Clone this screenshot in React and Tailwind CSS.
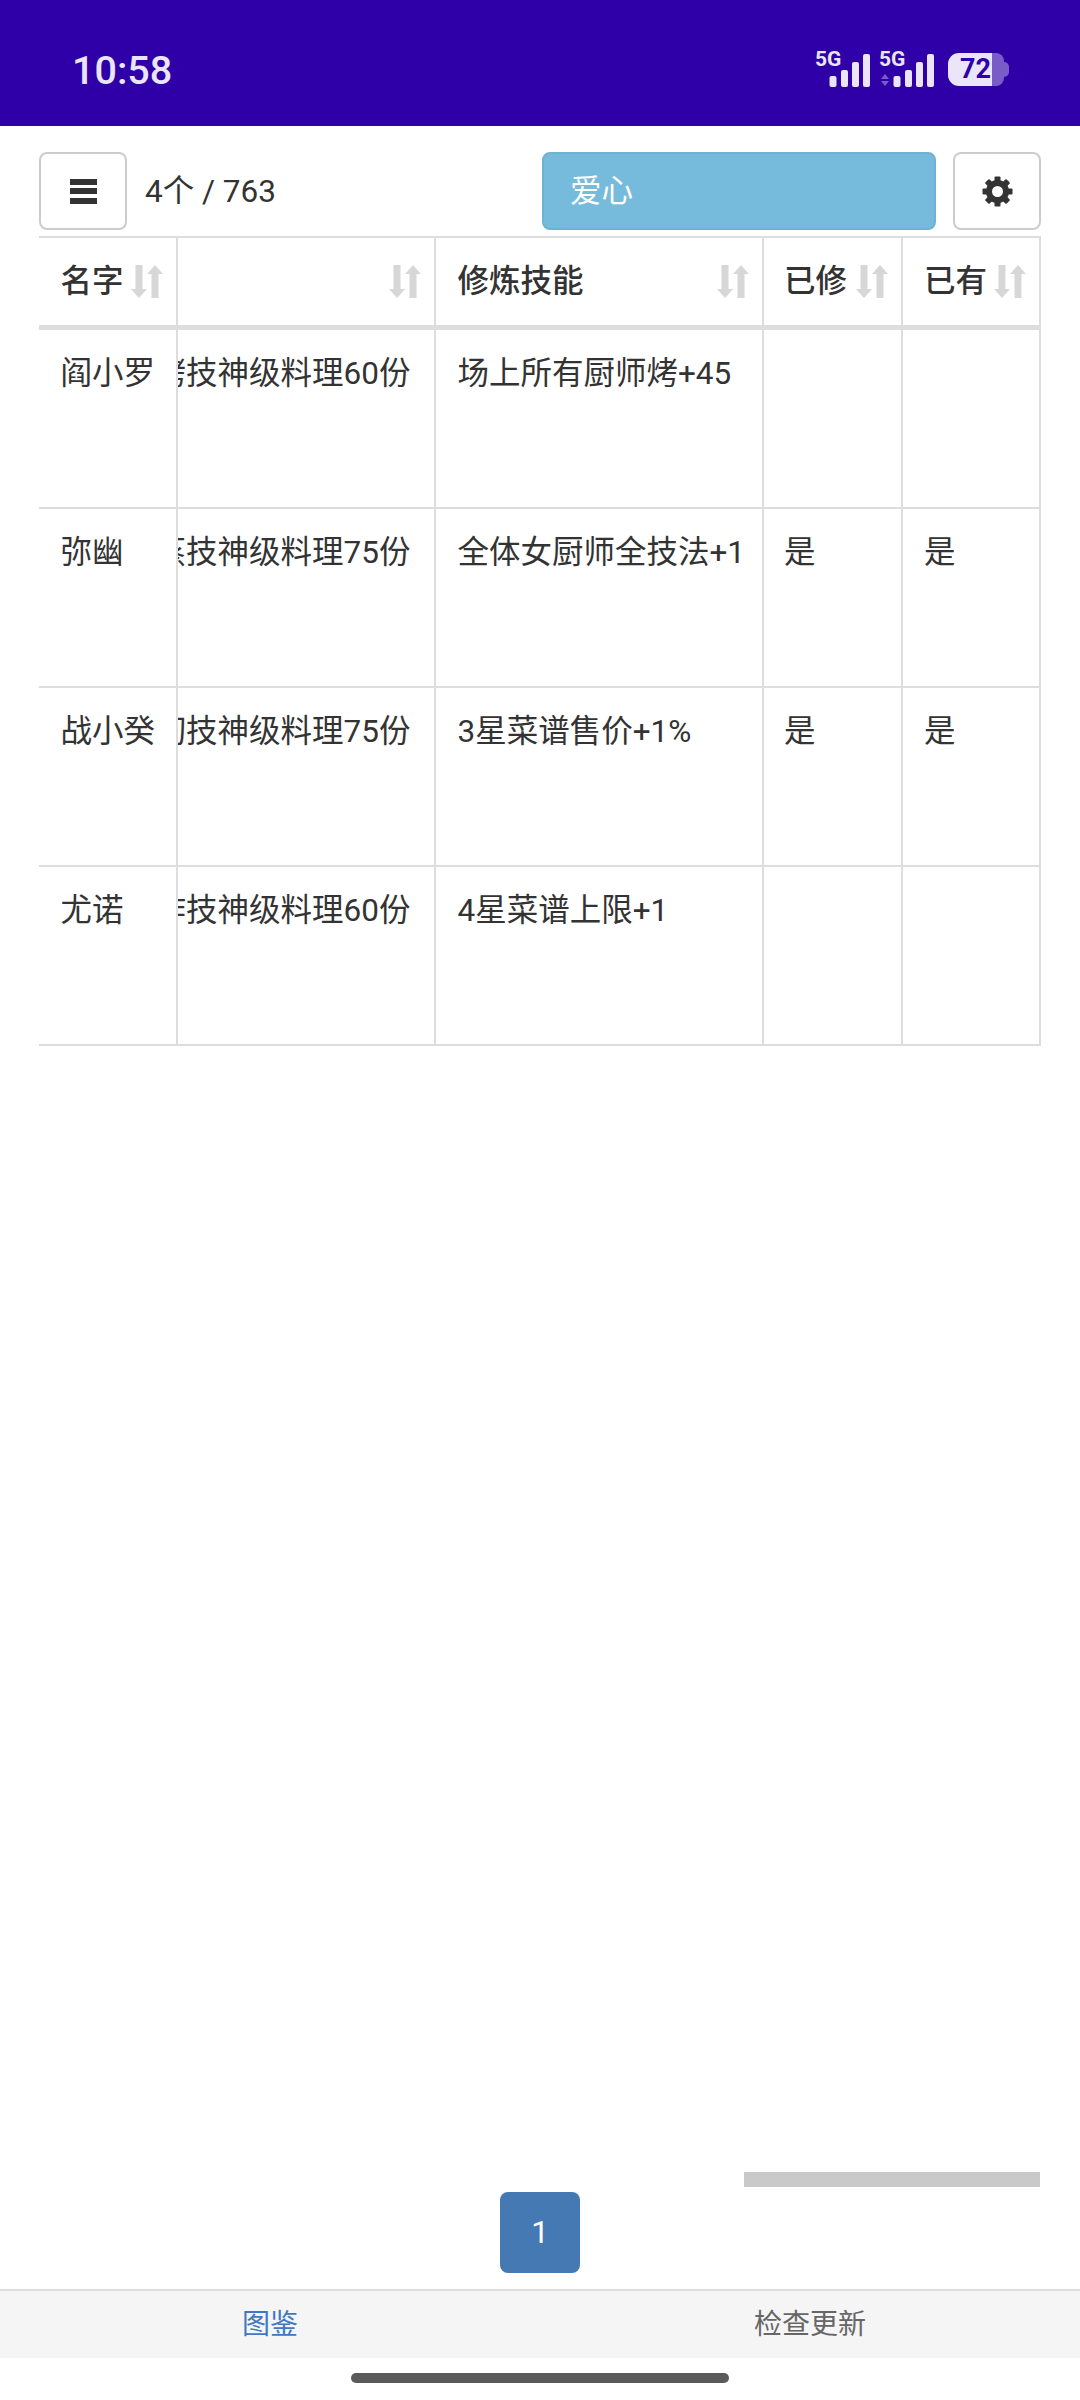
import React from "react";

function SortIcon() {
  return (
    <svg width="32" height="33" viewBox="0 0 32 33" className="shrink-0" fill="#d7d7d7">
      <path d="M4.500 0h7v24H16l-8 9-8-9h4.500z" />
      <path d="M24 0l8 9h-4.500v24h-7V9H16z" />
    </svg>
  );
}

function Cog() {
  const angles = [0, 45, 90, 135, 180, 225, 270, 315];
  return (
    <svg width="31" height="31" viewBox="0 0 31 31" fill="#333333">
      {angles.map((a) => (
        <rect key={a} x="12.500" y="0.500" width="6" height="7" rx="1" transform={`rotate(${a} 15.500 15.500)`} />
      ))}
      <circle cx="15.500" cy="15.500" r="8.500" fill="none" stroke="#333333" strokeWidth="6" />
    </svg>
  );
}

function Signal({ arrows }) {
  return (
    <div className="relative w-[54px] h-[36px]">
      <span className="absolute left-[-1px] top-[-4px] text-[21px] leading-[24px] font-bold text-[#ebe5fa]">5G</span>
      <svg className="absolute left-0 top-0" width="54" height="36" viewBox="0 0 54 36">
        <g fill="#ebe5fa">
          <rect x="13.500" y="25" width="7" height="11" rx="2" />
          <rect x="25" y="19" width="7" height="17" rx="2" />
          <rect x="36" y="11" width="7" height="25" rx="2" />
          <rect x="47" y="3" width="7" height="33" rx="2" />
        </g>
        {arrows && (
          <g fill="#7a5cc9">
            <path d="M5 23l4 5H1z" />
            <path d="M1 30h8l-4 5z" />
          </g>
        )}
      </svg>
    </div>
  );
}

function Battery() {
  return (
    <div className="flex items-center w-[61px] h-[33px] ml-[4px]">
      <div className="w-[44px] h-full bg-[#ebe5fa] rounded-l-[11px] flex items-center justify-end pr-[1px] text-[#2f00a7] text-[27px] font-bold leading-none">72</div>
      <div className="w-[12px] h-full bg-[#7a5cc9] rounded-r-[8px]" />
      <div className="w-[5px] h-[15px] bg-[#7a5cc9] rounded-r-[5px]" />
    </div>
  );
}

const widths = ["w-[139px]", "w-[258px]", "w-[328px]", "w-[139px]", "w-[138px]"];

const rows = [
  { name: "阎小罗", task: "烤技神级料理60份", skill: "场上所有厨师烤+45", a: "", b: "" },
  { name: "弥幽", task: "蒸技神级料理75份", skill: "全体女厨师全技法+1", a: "是", b: "是" },
  { name: "战小癸", task: "切技神级料理75份", skill: "3星菜谱售价+1%", a: "是", b: "是" },
  { name: "尤诺", task: "炸技神级料理60份", skill: "4星菜谱上限+1", a: "", b: "" },
];

function Head({ className, children }) {
  return (
    <div className={`${className} h-[87px] flex items-center justify-between pr-[13px] border-r-2 border-[#dddddd] shrink-0 font-medium`}>
      <span>{children}</span>
      <SortIcon />
    </div>
  );
}

function Cell({ className, children }) {
  return (
    <div className={`${className} pt-[24px] border-r-2 border-[#dddddd] shrink-0 whitespace-nowrap`}>
      {children}
    </div>
  );
}

export default function App() {
  return (
    <div className="w-[1080px] h-[2400px] bg-white flex flex-col text-[#333333] text-[31.500px] leading-[40px] font-['Roboto','Noto_Sans_CJK_SC',sans-serif]">
      <div className="h-[126px] bg-[#2f00a7] flex items-center justify-between pl-[72px] pr-[71px] pt-[12px] shrink-0">
        <span className="text-[39.500px] font-medium text-[#ebe5fa] leading-none pt-[3px]">10:58</span>
        <div className="flex items-center gap-[10px]">
          <Signal />
          <Signal arrows />
          <Battery />
        </div>
      </div>

      <div className="flex items-center h-[78px] mt-[26px] mb-[6px] pl-[39px] pr-[39px] shrink-0">
        <button className="w-[88px] h-[78px] border-2 border-[#cccccc] rounded-[8px] flex flex-col items-center justify-center gap-[3.500px]">
          <span className="block w-[27px] h-[6px] bg-[#333333]" />
          <span className="block w-[27px] h-[6px] bg-[#333333]" />
          <span className="block w-[27px] h-[6px] bg-[#333333]" />
        </button>
        <span className="ml-[18px] pt-[2px]">4个 / 763</span>
        <div className="ml-auto w-[394px] h-[78px] bg-[#76bbdb] rounded-[8px] border-2 border-[#6fb3d2] flex items-center pl-[26px] pt-[2px] text-white">爱心</div>
        <button className="ml-[17px] w-[88px] h-[78px] border-2 border-[#cccccc] rounded-[8px] flex items-center justify-center"><Cog /></button>
      </div>

      <div className="ml-[39px] w-[1002px] border-t-2 border-[#dddddd] shrink-0">
        <div className="flex border-b-[5px] border-[#dddddd]">
          <Head className={`${widths[0]} pl-[21.500px]`}>名字</Head>
          <Head className={`${widths[1]} pl-[21.500px]`}></Head>
          <Head className={`${widths[2]} pl-[21.500px]`}>修炼技能</Head>
          <Head className={`${widths[3]} pl-[20px]`}>已修</Head>
          <Head className={`${widths[4]} pl-[21px]`}>已有</Head>
        </div>
        {rows.map((r) => (
          <div key={r.name} className="flex h-[179px] border-b-2 border-[#dddddd]">
            <Cell className={`${widths[0]} pl-[21.500px]`}>{r.name}</Cell>
            <div className={`${widths[1]} shrink-0 border-r-2 border-[#dddddd] overflow-hidden pt-[24px] whitespace-nowrap`}>
              <div className="ml-[-23.500px]">{r.task}</div>
            </div>
            <Cell className={`${widths[2]} pl-[21.500px]`}>{r.skill}</Cell>
            <Cell className={`${widths[3]} pl-[20px]`}>{r.a}</Cell>
            <Cell className={`${widths[4]} pl-[21px]`}>{r.b}</Cell>
          </div>
        ))}
      </div>

      <div className="flex-1" />

      <div className="h-[15px] flex justify-end pr-[40px] shrink-0">
        <div className="w-[296px] bg-[#c9c9c9]" />
      </div>
      <div className="h-[81px] mt-[5px] mb-[16px] flex justify-center shrink-0">
        <div className="w-[80px] bg-[#4479b3] rounded-[8px] text-white flex items-center justify-center">1</div>
      </div>
      <div className="h-[69px] bg-[#f5f5f5] border-t-2 border-[#dddddd] flex shrink-0 text-[28px]">
        <div className="flex-1 flex items-center justify-center text-[#3f78c3]">图鉴</div>
        <div className="flex-1 flex items-center justify-center text-[#666666]">检查更新</div>
      </div>
      <div className="h-[42px] flex justify-center items-start pt-[15px] shrink-0">
        <div className="w-[378px] h-[10px] rounded-full bg-[#5a5a5a]" />
      </div>
    </div>
  );
}
